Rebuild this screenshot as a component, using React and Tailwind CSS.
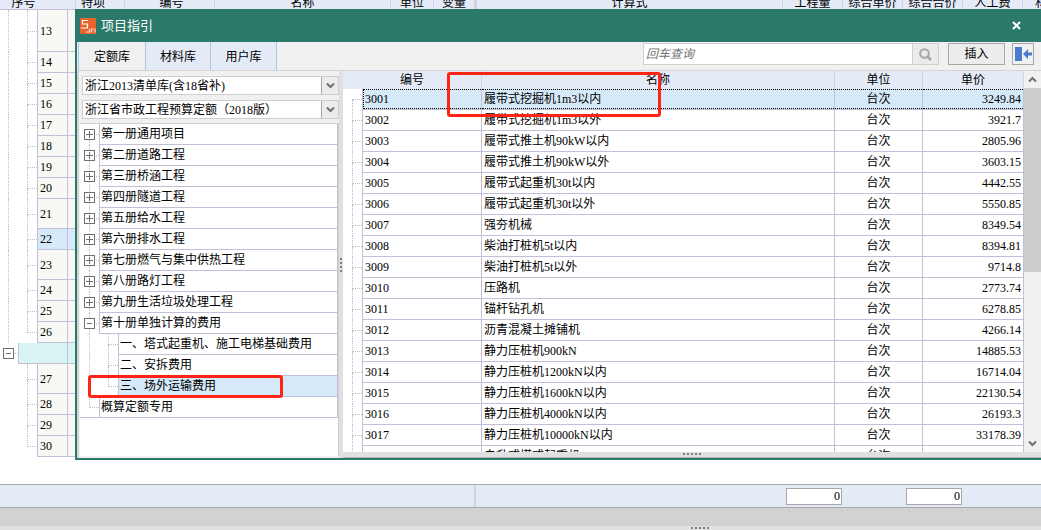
import { useState } from "react";

const sheetColumns = [
  { label: "序号", className: "w-[76px] pr-7" },
  { label: "特项", className: "w-[49px] pl-[2px] pr-4" },
  { label: "编号", className: "w-[90px] pl-1" },
  { label: "名称", className: "w-[176px]" },
  { label: "单位", className: "w-[43px]" },
  { label: "变量", className: "w-[43px] border-r-3" },
  { label: "计算式", className: "min-w-0 flex-1" },
  { label: "工程量", className: "w-[60px]" },
  { label: "综合单价", className: "w-[60px]" },
  { label: "综合合价", className: "w-[60px]" },
  { label: "人工费", className: "w-[60px]" },
  { label: "材", className: "w-[18px] pl-3" },
];

const sheetRows = [
  { no: 13, height: "h-[42px]" },
  { no: 14 },
  { no: 15 },
  { no: 16 },
  { no: 17 },
  { no: 18 },
  { no: 19 },
  { no: 20 },
  { no: 21, height: "h-[30px]" },
  { no: 22, selected: true },
  { no: 23, height: "h-[30px]" },
  { no: 24 },
  { no: 25 },
  { no: 26, last: true },
  { group: true },
  { no: 27, height: "h-[30px]", tail: true },
  { no: 28, tail: true },
  { no: 29, tail: true },
  { no: 30, tail: true, last: true },
];

const books = [
  { name: "第一册通用项目", first: true },
  { name: "第二册道路工程" },
  { name: "第三册桥涵工程" },
  { name: "第四册隧道工程" },
  { name: "第五册给水工程" },
  { name: "第六册排水工程" },
  { name: "第七册燃气与集中供热工程" },
  { name: "第八册路灯工程" },
  { name: "第九册生活垃圾处理工程" },
  {
    name: "第十册单独计算的费用",
    children: ["一、塔式起重机、施工电梯基础费用", "二、安拆费用", "三、场外运输费用"],
  },
];

const items = [
  { code: "3001", name: "履带式挖掘机1m3以内", price: "3249.84" },
  { code: "3002", name: "履带式挖掘机1m3以外", price: "3921.7" },
  { code: "3003", name: "履带式推土机90kW以内", price: "2805.96" },
  { code: "3004", name: "履带式推土机90kW以外", price: "3603.15" },
  { code: "3005", name: "履带式起重机30t以内", price: "4442.55" },
  { code: "3006", name: "履带式起重机30t以外", price: "5550.85" },
  { code: "3007", name: "强夯机械", price: "8349.54" },
  { code: "3008", name: "柴油打桩机5t以内", price: "8394.81" },
  { code: "3009", name: "柴油打桩机5t以外", price: "9714.8" },
  { code: "3010", name: "压路机", price: "2773.74" },
  { code: "3011", name: "锚杆钻孔机", price: "6278.85" },
  { code: "3012", name: "沥青混凝土摊铺机", price: "4266.14" },
  { code: "3013", name: "静力压桩机900kN", price: "14885.53" },
  { code: "3014", name: "静力压桩机1200kN以内", price: "16714.04" },
  { code: "3015", name: "静力压桩机1600kN以内", price: "22130.54" },
  { code: "3016", name: "静力压桩机4000kN以内", price: "26193.3" },
  { code: "3017", name: "静力压桩机10000kN以内", price: "33178.39" },
  { code: "3018", name: "自升式塔式起重机", price: "" },
];

const tabs = [
  { name: "定额库", width: "w-[67px]" },
  { name: "材料库", width: "w-[65px]" },
  { name: "用户库", width: "w-[66px]" },
];

// Dotted connector in front of a tree node
const Branch = ({ className, first, last }) => (
  <span className={`flex shrink-0 flex-col ${className}`}>
    <span
      className={`flex-1 border-b border-dotted border-[#bdbdcd] ${first ? "" : "border-l"}`}
    />
    <span className={`flex-1 border-dotted border-[#bdbdcd] ${last ? "" : "border-l"}`} />
  </span>
);

const Expander = ({ open, label }) => (
  <button type="button" aria-label={label} className="block size-[11px] shrink-0 bg-white">
    <svg viewBox="0 0 11 11" className="size-[11px]" shapeRendering="crispEdges">
      <rect x="0.5" y="0.5" width="10" height="10" fill="#fff" stroke="#707070" />
      <path d={open ? "M3 5.5h5" : "M2 5.5h7M5.5 2v7"} stroke="#707070" fill="none" />
    </svg>
  </button>
);

const Chevron = ({ up }) => (
  <svg viewBox="0 0 9 9" className="size-[9px]" fill="none" stroke="#707070" strokeWidth="2">
    <path d={up ? "M1 6.5 4.5 3 8 6.5" : "M1 2.5 4.5 6 8 2.5"} />
  </svg>
);

const Grip = ({ vertical, count = 5 }) => (
  <span className={`flex gap-[2px] ${vertical ? "flex-col" : ""}`}>
    {Array.from({ length: count }, (_, i) => (
      <span key={i} className="size-[2px] bg-[#808080]" />
    ))}
  </span>
);

const Picker = ({ label, value }) => (
  <div className="flex h-[19px] border border-[#cfcfcf] bg-white">
    <select
      aria-label={label}
      className="min-w-0 flex-1 appearance-none bg-white pl-[2px] leading-4 outline-none"
    >
      <option>{value}</option>
    </select>
    <span className="flex w-[17px] items-center justify-center border-l border-[#a8a8a8] bg-[#ececec]">
      <Chevron />
    </span>
  </div>
);

const Sheet = () => (
  <div>
    <div className="flex h-[10px] items-end overflow-hidden border-b border-[#c1c0d8] bg-[#e4ebf7]">
      {sheetColumns.map((col) => (
        <div
          key={col.label}
          className={`shrink-0 border-r border-[#d3d2e8] text-center leading-3 whitespace-nowrap ${col.className}`}
        >
          {col.label}
        </div>
      ))}
    </div>
    {sheetRows.map((row, i) =>
      row.group ? (
        <div key={i} className="flex h-[21px]">
          <div className="flex w-[18px] items-center pl-[3px]">
            <Expander open label="折叠" />
            <span className="w-1 border-b border-dotted border-[#bdbdcd]" />
          </div>
          <div className="w-[50px] border-r border-b border-l border-[#c1c0d8] bg-[#d8f4f4]" />
          <div className="flex-1 border-b border-[#c1c0d8] bg-[#d8f4f4]" />
        </div>
      ) : (
        <div key={i} className={`flex ${row.height || "h-[21px]"}`}>
          <span className="w-2" />
          <span
            className={`w-[19px] border-dotted border-[#bdbdcd] ${row.tail ? "" : "border-l"}`}
          />
          <Branch className="w-[10px]" last={row.last} />
          <div
            className={`flex w-[31px] items-center border-r border-b border-l border-[#c1c0d8] pl-[2px] ${
              row.selected ? "bg-[#d6e9f9]" : "bg-[#f8f9f4]"
            }`}
          >
            {row.no}
          </div>
          <div
            className={`flex-1 border-b border-[#c1c0d8] ${
              row.selected ? "bg-[#d6e9f9]" : "bg-[#f8f9f4]"
            }`}
          />
        </div>
      )
    )}
  </div>
);

const BookTree = () => (
  <ul className="min-h-0 flex-1 overflow-hidden border-t border-r border-[#cfcfcf] bg-white">
    {books.map((book) => (
      <li key={book.name}>
        <div className="flex h-[21px]">
          <div className="relative flex w-[19px] shrink-0 pl-[9px]">
            <Branch className="w-[10px]" first={book.first} />
            <span className="absolute top-[5px] left-1">
              <Expander open={!!book.children} label={book.name} />
            </span>
          </div>
          <div className="flex flex-1 items-center border-r border-b border-l border-[#c1c0d8] pl-px">
            {book.name}
          </div>
        </div>
        {book.children && (
          <ul>
            {book.children.map((child, i) => {
              const selected = i === 2;
              return (
                <li key={child} className="flex h-[21px] pl-[9px]">
                  <span className="w-[19px] shrink-0 border-l border-dotted border-[#bdbdcd]" />
                  <Branch className="w-[10px]" last={selected} />
                  <div
                    className={`flex flex-1 items-center border-r border-b border-l border-[#c1c0d8] pl-px ${
                      selected ? "bg-[#d6e9f9]" : ""
                    }`}
                  >
                    {child}
                  </div>
                </li>
              );
            })}
          </ul>
        )}
      </li>
    ))}
    <li className="flex h-[21px] border-b border-[#c1c0d8] pl-[9px]">
      <Branch className="w-[10px]" last />
      <div className="flex flex-1 items-center border-r border-l border-[#c1c0d8] pl-px">
        概算定额专用
      </div>
    </li>
  </ul>
);

const ItemTable = () => {
  const [selected, setSelected] = useState("3001");
  const cell = "border-r border-b border-[#c1c0d8] p-0";
  const head = "h-[18px] border-r border-[#d3d2e8] p-0 font-normal";

  return (
    <div className="min-w-0 flex-1 overflow-hidden bg-white">
      <table className="w-full table-fixed border-separate border-spacing-0">
        <colgroup>
          <col className="w-[20px]" />
          <col className="w-[119px]" />
          <col />
          <col className="w-[88px]" />
          <col className="w-[101px]" />
        </colgroup>
        <thead className="bg-[#e4ebf7]">
          <tr>
            <th colSpan={2} className={head}>编号</th>
            <th className={head}>名称</th>
            <th className={head}>单位</th>
            <th className={head}>单价</th>
          </tr>
        </thead>
        <tbody>
          {items.map((item, i) => {
            const active = item.code === selected;
            const inner = `flex h-5 items-center ${
              active ? "border-y border-dotted border-black bg-[#d6e9f9]" : ""
            }`;
            return (
              <tr key={item.code} onClick={() => setSelected(item.code)}>
                <td className="border-r border-[#c1c0d8] p-0">
                  <div className="flex h-[21px] pl-[9px]">
                    <Branch className="w-[10px]" first={i === 0} />
                  </div>
                </td>
                <td className={cell}>
                  <div className={`${inner} ${active ? "border-l pl-px" : "pl-[2px]"}`}>
                    {item.code}
                  </div>
                </td>
                <td className={cell}>
                  <div className={`${inner} pl-[2px] whitespace-nowrap`}>{item.name}</div>
                </td>
                <td className={cell}>
                  <div className={`${inner} justify-center`}>台次</div>
                </td>
                <td className={cell}>
                  <div className={`${inner} justify-end pr-[2px]`}>{item.price}</div>
                </td>
              </tr>
            );
          })}
        </tbody>
      </table>
    </div>
  );
};

const Logo = () => (
  <svg viewBox="0 0 16 16" className="size-4" fill="none">
    <rect width="16" height="16" rx="1" fill="#e8622c" />
    <path d="M8 2.5H2.5V6h5v4H1" stroke="#fff" strokeWidth="1.2" />
    <path d="M6 14h3.500v-3M11.500 14.500V11h2M15 10.500v4" stroke="#fbd9c8" strokeWidth="1.2" />
  </svg>
);

const GuideDialog = () => {
  const [tab, setTab] = useState("定额库");

  return (
    <section
      aria-label="项目指引"
      className="absolute top-[9px] right-0 bottom-[70px] left-[75px] flex flex-col border-b-2 border-l-2 border-[#2b7a69] bg-[#f0f0f0]"
    >
      {/* Title bar */}
      <header className="flex h-[33px] shrink-0 items-center bg-[#2b7a69] pr-5 pl-[3px] text-white">
        <Logo />
        <h2 className="ml-[5px] flex-1 text-[13px]">项目指引</h2>
        <button type="button" aria-label="关闭">
          <svg viewBox="0 0 9 9" className="size-[9px]" stroke="#fff" strokeWidth="2">
            <path d="M1 1l7 7M8 1 1 8" />
          </svg>
        </button>
      </header>

      {/* Tabs and search */}
      <div className="flex h-[29px] shrink-0 border-b border-[#d4d4d4] pr-[7px] pl-px">
        <div className="flex border-l border-[#a9c8e4]" role="tablist">
          {tabs.map(({ name, width }) => (
            <button
              key={name}
              type="button"
              role="tab"
              aria-selected={tab === name}
              onClick={() => setTab(name)}
              className={`${width} border-r border-[#a9c8e4] pt-[2px] ${
                tab === name ? "bg-[#f0f0f0]" : "bg-[#e4ebf7]"
              }`}
            >
              {name}
            </button>
          ))}
        </div>
        <div className="flex flex-1 items-start justify-end pt-px">
          <input
            type="text"
            aria-label="查询"
            placeholder="回车查询"
            className="h-[22px] w-[270px] border border-[#cfcfcf] bg-white px-[2px] italic outline-none placeholder:text-[#707070]"
          />
          <button
            type="button"
            aria-label="搜索"
            className="flex h-[22px] w-[26px] items-center justify-center border border-l-0 border-[#cfcfcf] bg-[#ebebeb]"
          >
            <svg viewBox="0 0 13 13" className="size-[13px]" fill="none" stroke="#a6a6a6">
              <circle cx="5.5" cy="5.5" r="4.3" strokeWidth="2" />
              <path d="M8.5 8.5 12 12" strokeWidth="2.5" />
            </svg>
          </button>
          <button
            type="button"
            className="ml-[9px] h-[22px] w-[57px] border border-[#a8a8a8] bg-[#ececec]"
          >
            插入
          </button>
          <button
            type="button"
            aria-label="停靠"
            className="ml-[7px] flex h-[22px] w-[22px] items-center justify-center border border-[#a8a8a8] bg-[#f0f0f0]"
          >
            <svg viewBox="0 0 18 16" className="h-4 w-[18px]" fill="#4a7ccb">
              <path d="M1 1h7v14H1zM9 8l5-5v3.500h4v3h-4V13z" />
            </svg>
          </button>
        </div>
      </div>

      {/* Body */}
      <div className="flex min-h-0 flex-1">
        <div className="flex w-[262px] shrink-0 flex-col border-l-2 border-[#d4d4d4] pb-[2px]">
          <div className="flex flex-col gap-[5px] pt-[5px] pb-1 pl-[3px]">
            <Picker label="清单库" value="浙江2013清单库(含18省补)" />
            <Picker label="定额" value="浙江省市政工程预算定额（2018版）" />
          </div>
          <div className="flex min-h-0 flex-1 pl-px">
            <BookTree />
          </div>
        </div>
        <div className="flex w-1 shrink-0 items-center bg-[#e0e0e0] pl-px">
          <Grip vertical count={4} />
        </div>
        <div className="flex min-w-0 flex-1 flex-col">
          <div className="flex min-h-0 flex-1">
            <ItemTable />
            <div className="flex w-[17px] shrink-0 flex-col items-center bg-[#f0f0f0]">
              <span className="flex h-[17px] items-center">
                <Chevron up />
              </span>
              <span className="h-[184px] w-full bg-[#cdcdcd]" />
              <span className="mt-auto flex h-[17px] items-center">
                <Chevron />
              </span>
            </div>
          </div>
          <div className="flex h-[6px] shrink-0 items-start justify-center border-b border-[#b0b0b0] bg-[#e0e0e0] pt-px">
            <Grip />
          </div>
        </div>
      </div>

      {/* Highlight frames */}
      <div className="pointer-events-none absolute top-[63px] left-[370px] h-[45px] w-[214px] rounded-[3px] border-3 border-[#ff2414]" />
      <div className="pointer-events-none absolute top-[366px] left-[11px] h-[23px] w-[195px] rounded-[3px] border-3 border-[#ff2414]" />
    </section>
  );
};

const App = () => {
  return (
    <main className="relative flex h-screen flex-col overflow-hidden bg-white font-['Liberation_Serif','Noto_Sans_CJK_SC',serif] text-[12px] leading-4 text-black">
      <Sheet />
      <GuideDialog />

      {/* Totals */}
      <footer className="mt-auto">
        <div className="flex h-6 items-center border-y border-[#a8a8a8] bg-[#e4ebf7] pr-[79px]">
          <span className="w-[476px] self-stretch border-r-2 border-[#d3d2e8]" />
          <div className="flex flex-1 justify-end gap-16">
            <input
              aria-label="综合单价合计"
              defaultValue="0"
              className="h-[17px] w-14 border border-[#a8a8a8] bg-white px-px text-right outline-none"
            />
            <input
              aria-label="综合合价合计"
              defaultValue="0"
              className="h-[17px] w-14 border border-[#a8a8a8] bg-white px-px text-right outline-none"
            />
          </div>
        </div>
        <div className="h-[18px] bg-[#d2d2d2]" />
        <div className="flex h-1 items-end justify-center bg-[#e0e0e0] pb-px pl-[359px]">
          <Grip />
        </div>
      </footer>
    </main>
  );
};

export default App;
